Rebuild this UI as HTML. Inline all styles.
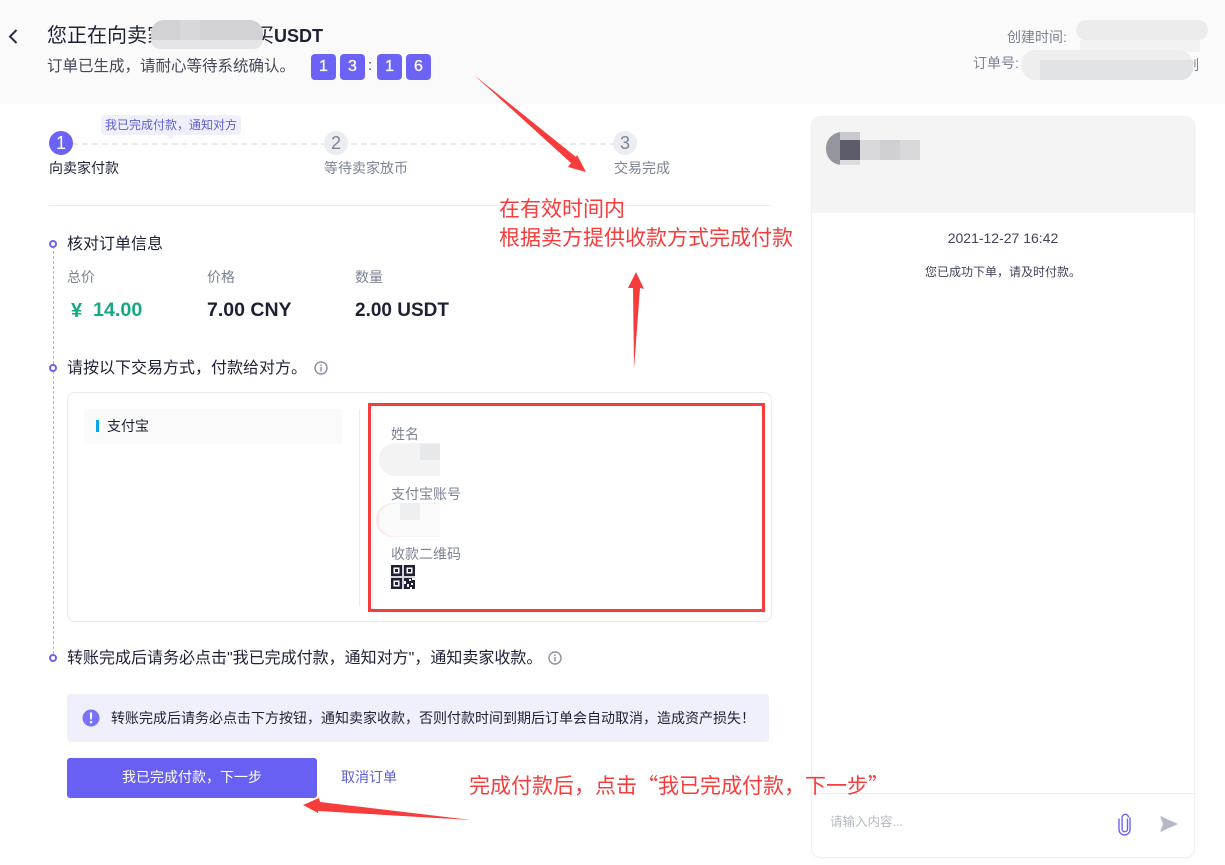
<!DOCTYPE html>
<html lang="zh"><head><meta charset="utf-8"><title>订单</title>
<style>
*{box-sizing:border-box}
html,body{margin:0;padding:0;background:#fff}
body{width:1225px;height:865px;position:relative;overflow:hidden;font-family:"Liberation Sans","Noto Sans CJK SC",sans-serif;color:#1e2136}
.t{position:absolute;white-space:nowrap;line-height:20px}
.b{position:absolute}
.g{color:#7c8394}
.num{position:absolute;top:54px;width:25px;height:26px;background:#6c63f6;border-radius:4px;color:#fff;font-size:16px;line-height:25px;text-align:center;-webkit-text-stroke:.3px #fff}
.dot{position:absolute;left:49px;width:8px;height:8px;border:2.500px solid #6c63f6;border-radius:50%;background:#fff}
.circle{position:absolute;top:131px;width:24px;height:24px;border-radius:50%;background:#ebedf1;color:#7c8394;text-align:center;font-size:18px;line-height:24px}
.r{position:absolute;white-space:nowrap;color:#f73c3c;font-size:21px;line-height:28px}
.q{font-family:"Noto Sans CJK SC",sans-serif}
</style></head><body>

<div class="b" style="left:0;top:0;width:1225px;height:104px;background:#fafafa"></div>
<svg class="b" style="left:6px;top:28px" width="14" height="17" viewBox="0 0 14 17"><path d="M10.500 2L4 8.500L10.500 15" fill="none" stroke="#2b2e40" stroke-width="2"/></svg>
<div class="t" style="left:47px;top:26px;font-size:20px">您正在向卖家</div>
<div class="t" style="left:254px;top:26px;font-size:20px">买<span style="font-size:18px;font-weight:bold">USDT</span></div>
<div class="b" style="left:151px;top:20px;width:112px;height:29px;border-radius:13px;background:#d2d2d5"></div>
<div class="b" style="left:180px;top:20px;width:20px;height:20px;background:#d8d8da"></div>
<div class="b" style="left:151px;top:40px;width:112px;height:9px;border-radius:0 0 12px 12px;background:#e5e5e7"></div>
<div class="t" style="left:47px;top:57px;font-size:15.500px;color:#444859">订单已生成&#65292;请耐心等待系统确认。</div>
<div class="num" style="left:311px">1</div><div class="num" style="left:340px">3</div>
<div class="t" style="left:368px;top:56px;font-size:15px;color:#444859">:</div>
<div class="num" style="left:377px">1</div><div class="num" style="left:406px">6</div>

<div class="t g" style="left:1007px;top:27px;font-size:14px">创建时间:</div>
<div class="t g" style="left:973px;top:53px;font-size:14px">订单号:</div>
<div class="t g" style="left:1185px;top:55px;font-size:14px">制</div>
<div class="b" style="left:1076px;top:20px;width:132px;height:20px;border-radius:10px;background:#ececed"></div>
<div class="b" style="left:1080px;top:40px;width:120px;height:12px;background:#f2f2f3"></div>
<div class="b" style="left:1021px;top:50px;width:172px;height:30px;border-radius:15px;background:#eeeeef"></div>
<div class="b" style="left:1040px;top:60px;width:153px;height:20px;border-radius:0 0 12px 0;background:#e2e3e5"></div>

<!-- stepper -->
<div class="b" style="left:101px;top:115px;width:140px;height:20px;background:#f0f0fd;border-radius:4px"></div>
<div class="b" style="left:166px;top:135px;border-left:5px solid transparent;border-right:5px solid transparent;border-top:4px solid #f0f0fd"></div>
<div class="t" style="left:105px;top:115px;font-size:12px;color:#5d5fd0">我已完成付款&#65292;通知对方</div>
<div class="b" style="left:72px;top:143px;width:544px;border-top:2px dashed #e9eaef"></div>
<div class="circle" style="left:49px;background:#6c63f6;color:#fff">1</div>
<div class="circle" style="left:324px">2</div>
<div class="circle" style="left:613px">3</div>
<div class="t" style="left:49px;top:158px;font-size:14px">向卖家付款</div>
<div class="t g" style="left:324px;top:158px;font-size:14px">等待卖家放币</div>
<div class="t g" style="left:614px;top:158px;font-size:14px">交易完成</div>
<div class="b" style="left:49px;top:205px;width:723px;height:1px;background:#ecedf0"></div>

<!-- timeline -->
<div class="b" style="left:53px;top:246px;height:408px;border-left:1px dashed #b5b7c0"></div>
<div class="dot" style="top:240px"></div>
<div class="dot" style="top:364px"></div>
<div class="dot" style="top:654px"></div>

<div class="t" style="left:67px;top:235px;font-size:16px">核对订单信息</div>
<div class="t g" style="left:67px;top:267px;font-size:14px">总价</div>
<div class="t g" style="left:207px;top:267px;font-size:14px">价格</div>
<div class="t g" style="left:355px;top:267px;font-size:14px">数量</div>
<div class="t" style="left:71px;top:301px;font-size:20px;font-weight:bold;color:#17a884">¥</div>
<div class="t" style="left:93px;top:300px;font-size:19.700px;font-weight:bold;color:#17a884">14.00</div>
<div class="t" style="left:207px;top:300px;font-size:19.500px;font-weight:bold">7.00 CNY</div>
<div class="t" style="left:355px;top:301px;font-size:19px;font-weight:bold">2.00 USDT</div>

<div class="t" style="left:67px;top:359px;font-size:16px">请按以下交易方式&#65292;付款给对方。</div>
<svg class="b" style="left:314px;top:361px" width="14" height="14" viewBox="0 0 14 14"><circle cx="7" cy="7" r="6" fill="none" stroke="#8b909e" stroke-width="1.400"/><path d="M7 6v4.500M7 3.500v1.500" stroke="#8b909e" stroke-width="1.400"/></svg>

<div class="b" style="left:67px;top:392px;width:705px;height:230px;border:1px solid #e8e9ed;border-radius:8px"></div>
<div class="b" style="left:84px;top:409px;width:258px;height:35px;background:#fafafa"></div>
<div class="b" style="left:96px;top:420px;width:3px;height:12px;background:#0ba5ec"></div>
<div class="t" style="left:107px;top:416px;font-size:14px">支付宝</div>
<div class="b" style="left:359px;top:409px;width:1px;height:197px;background:#ebecef"></div>

<div class="t g" style="left:391px;top:424px;font-size:14px">姓名</div>
<div class="b" style="left:379px;top:443px;width:61px;height:33px;border-radius:16px 0 0 16px;background:#f3f3f4"></div>
<div class="b" style="left:420px;top:444px;width:20px;height:16px;background:#e7e8ea"></div>
<div class="t g" style="left:391px;top:484px;font-size:14px">支付宝账号</div>
<div class="b" style="left:376px;top:503px;width:64px;height:34px;border-radius:17px 0 0 17px;background:#fafafa;box-shadow:inset 2px 0 2px #fde3e3"></div>
<div class="b" style="left:400px;top:503px;width:20px;height:17px;background:#eeeff1"></div>
<div class="t g" style="left:391px;top:544px;font-size:14px">收款二维码</div>
<svg class="b" style="left:391px;top:565px" width="24" height="24" viewBox="0 0 24 24"><path fill="#d4d4d8" d="M0 0h24v24H0z"/><path fill="#1e2136" d="M0 0h11v11H0zM13 0h11v11H13zM0 13h11v11H0zM13 13h11v11H13z"/><path fill="#fff" d="M2.500 2.500h6v6h-6zM15.500 2.500h6v6h-6zM2.500 15.500h6v6h-6zM13 16h2v3h-2zM18 14h2v2h-2zM16 19h2v3h-2zM20 18h2v2h-2zM21 13h3v2h-3zM19 22h2v2h-2z"/><path fill="#1e2136" d="M4 4h3v3H4zM17 4h3v3h-3zM4 17h3v3H4z"/></svg>

<div class="b" style="left:368px;top:403px;width:397px;height:209px;border:3px solid #f73c3c"></div>

<div class="t" style="left:67px;top:649px;font-size:16px">转账完成后请务必点击"我已完成付款&#65292;通知对方"&#65292;通知卖家收款。</div>
<svg class="b" style="left:548px;top:651px" width="14" height="14" viewBox="0 0 14 14"><circle cx="7" cy="7" r="6" fill="none" stroke="#8b909e" stroke-width="1.400"/><path d="M7 6v4.500M7 3.500v1.500" stroke="#8b909e" stroke-width="1.400"/></svg>

<div class="b" style="left:67px;top:694px;width:702px;height:48px;background:#f0f0fc;border-radius:4px"></div>
<svg class="b" style="left:82px;top:709px" width="18" height="18" viewBox="0 0 18 18"><circle cx="9" cy="9" r="8.500" fill="#7a72f5"/><path d="M7.800 3.500h2.400l-.4 7h-1.600zM7.900 12h2.200v2.300H7.900z" fill="#fff"/></svg>
<div class="t" style="left:111px;top:708px;font-size:14px">转账完成后请务必点击下方按钮&#65292;通知卖家收款&#65292;否则付款时间到期后订单会自动取消&#65292;造成资产损失&#65281;</div>

<div class="b" style="left:67px;top:758px;width:250px;height:40px;background:#6760f2;border-radius:3px;color:#fff;font-size:14px;line-height:38px;text-align:center">我已完成付款&#65292;下一步</div>
<div class="t" style="left:341px;top:767px;font-size:14px;color:#5d5fd0">取消订单</div>

<!-- chat -->
<div class="b" style="left:811px;top:116px;width:384px;height:742px;border:1px solid #f0f0f2;border-radius:10px;box-shadow:0 1px 3px rgba(0,0,0,.04)"></div>
<div class="b" style="left:812px;top:117px;width:382px;height:96px;background:#f4f4f5;border-radius:9px 9px 0 0"></div>
<div class="b" style="left:826px;top:132px;width:34px;height:33px;border-radius:16px 0 0 16px;background:#94959f"></div>
<div class="b" style="left:840px;top:132px;width:20px;height:8px;background:#c8c8cd"></div>
<div class="b" style="left:840px;top:140px;width:20px;height:20px;background:#5b5d6b"></div>
<div class="b" style="left:840px;top:160px;width:20px;height:5px;background:#dcdcdf"></div>
<div class="b" style="left:860px;top:140px;width:60px;height:20px;background:#d9d9dc"></div>
<div class="b" style="left:880px;top:140px;width:20px;height:20px;background:#d0d0d4"></div>
<div class="t" style="left:812px;width:382px;top:228px;font-size:14px;text-align:center;color:#41445a">2021-12-27 16:42</div>
<div class="t" style="left:812px;width:382px;top:262px;font-size:12px;text-align:center;color:#41445a">您已成功下单&#65292;请及时付款。</div>
<div class="b" style="left:812px;top:793px;width:382px;height:1px;background:#ecedf0"></div>
<div class="t" style="left:830px;top:812px;font-size:12.500px;color:#b5b8c2">请输入内容...</div>
<svg class="b" style="left:1117px;top:812px" width="16" height="24" viewBox="0 0 16 24"><path d="M11 6.500V17a2.700 2.700 0 0 1-5.400 0V5.500a3.200 3.200 0 0 1 6.400 0M2.500 6.500V17.500a5.500 5.500 0 0 0 11 0V5.500" fill="none" stroke="#6c63f6" stroke-width="1.400" transform="translate(-.5 0)"/></svg>
<svg class="b" style="left:1159px;top:815px" width="20" height="18" viewBox="0 0 20 18"><path d="M1 1L19 9L1 17L4 9Z" fill="#b5bac6"/></svg>

<!-- annotations -->
<svg class="b" style="left:0;top:0" width="1225" height="865" viewBox="0 0 1225 865">
<path d="M474 75L576 157L577 155L586 172L568 167L571 163Z" fill="#f73c3c"/>
<path d="M634 369L633 288L628 288L636 272L644 289L640 288Z" fill="#f73c3c"/>
<path d="M471 820L320 802L319 798L303 805L318 813L318 811Z" fill="#f73c3c"/>
</svg>
<div class="r" style="left:499px;top:196px">在有效时间内</div>
<div class="r" style="left:499px;top:225px">根据卖方提供收款方式完成付款</div>
<div class="r" style="left:469px;top:771px">完成付款后&#65292;点击<span class="q">“</span>我已完成付款&#65292;下一步<span class="q">”</span></div>
</body></html>
